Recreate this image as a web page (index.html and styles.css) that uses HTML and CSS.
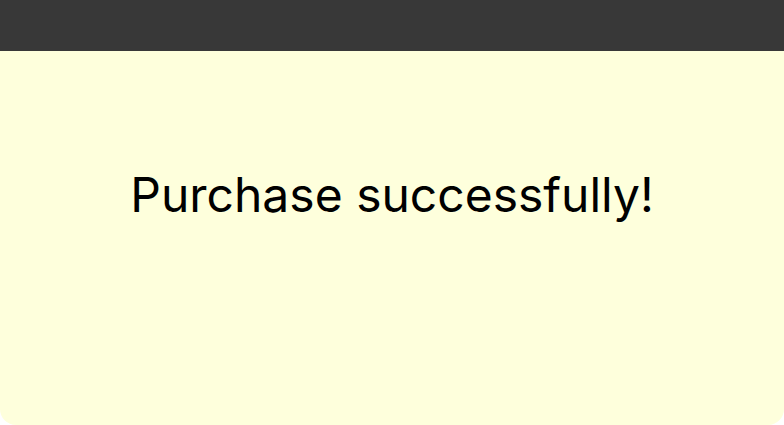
FILE: index.html
```html
<!DOCTYPE html>
<html>
<head>
<meta charset="utf-8">
<link rel="stylesheet" href="styles.css">
</head>
<body>
<div class="page">
  <header class="topbar"></header>
  <main class="panel">
    <h1 class="message">Purchase successfully!</h1>
  </main>
</div>
</body>
</html>
```
FILE: styles.css
```css
html, body {
  margin: 0;
  padding: 0;
  background: #ffffff;
}
.page {
  width: 784px;
  height: 425px;
  display: flex;
  flex-direction: column;
}
.topbar {
  height: 51px;
  background: #383838;
  flex: none;
}
.panel {
  flex: 1;
  background: #feffdc;
  border-radius: 0 0 16px 16px;
  display: flex;
  justify-content: center;
  padding-top: 114px;
  box-sizing: border-box;
}
.message {
  margin: 0;
  font-family: Inter, "Noto Sans", sans-serif;
  font-weight: 400;
  font-size: 48px;
  line-height: 60px;
  color: #000000;
  height: 60px;
}
```
